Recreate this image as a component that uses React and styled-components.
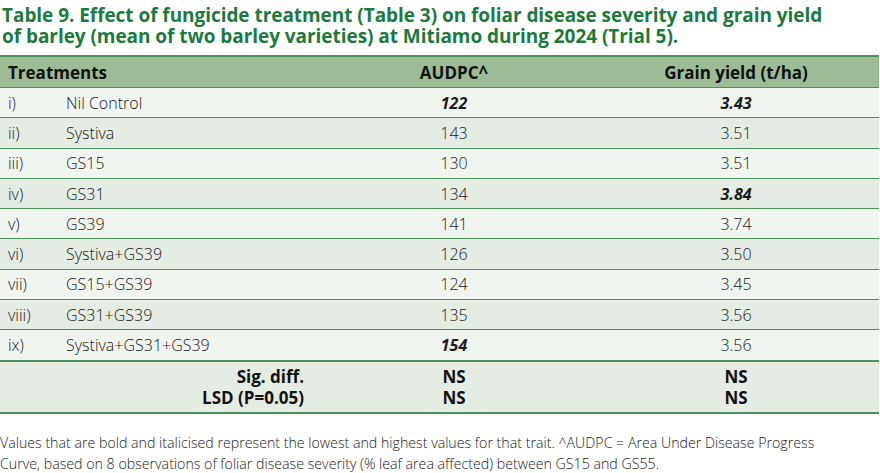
import React from "react";
import styled, { createGlobalStyle } from "styled-components";

const Global = createGlobalStyle`
  html, body { margin: 0; padding: 0; background: #ffffff; }
  body { font-family: "Open Sans", "Noto Sans", sans-serif; color: #1a1a1a; }
`;

const Page = styled.div`
  width: 880px;
  height: 473px;
  overflow: hidden;
  background: #fff;
`;

const Title = styled.h1`
  margin: 0;
  padding: 5px 0 0 2px;
  height: 55px;
  box-sizing: border-box;
  font-family: "Open Sans", sans-serif;
  font-weight: 700;
  font-size: 19px;
  line-height: 21px;
  color: #1c7a3d;
  letter-spacing: -0.05px;
`;

const Table = styled.div`
  width: 879px;
  display: grid;
  grid-template-columns: 315px 278px 1fr;
  border-top: 2px solid #4e8f5b;
  border-bottom: 2px solid #4e8f5b;
`;

const HeadCell = styled.div`
  background: #9dbb97;
  height: 30px;
  display: flex;
  align-items: center;
  justify-content: ${(p) => (p.$left ? "flex-start" : "center")};
  padding-left: ${(p) => (p.$left ? "8px" : "0")};
  font-weight: 700;
  font-size: 17px;
  color: #111;
  border-bottom: 1px solid #4e8f5b;
`;

const Cell = styled.div`
  background: ${(p) => (p.$alt ? "#e5ece3" : "#f0f5ef")};
  height: 29.3px;
  display: flex;
  align-items: center;
  justify-content: ${(p) => (p.$left ? "flex-start" : "center")};
  font-size: 16px;
  color: #1a1a1a;
  border-bottom: ${(p) => (p.$last ? "2px" : "1px")} solid #4e8f5b;
  font-weight: ${(p) => (p.$hi ? 700 : 300)};
  font-style: ${(p) => (p.$hi ? "italic" : "normal")};
`;

const Num = styled.span`
  width: 58px;
  padding-left: 8px;
`;

const Foot = styled.div`
  background: #e5ece3;
  height: 50px;
  display: flex;
  flex-direction: column;
  justify-content: center;
  align-items: ${(p) => (p.$right ? "flex-end" : "center")};
  padding-right: ${(p) => (p.$right ? "11px" : "0")};
  font-weight: 700;
  font-size: 17px;
  line-height: 21px;
  color: #111;
`;

const Note = styled.p`
  margin: 0;
  padding: 18px 0 0 0;
  font-size: 14.2px;
  font-weight: 300;
  line-height: 21px;
  color: #1a1a1a;
`;

const rows = [
  ["i)", "Nil Control", "122", "3.43", true, true],
  ["ii)", "Systiva", "143", "3.51"],
  ["iii)", "GS15", "130", "3.51"],
  ["iv)", "GS31", "134", "3.84", false, true],
  ["v)", "GS39", "141", "3.74"],
  ["vi)", "Systiva+GS39", "126", "3.50"],
  ["vii)", "GS15+GS39", "124", "3.45"],
  ["viii)", "GS31+GS39", "135", "3.56"],
  ["ix)", "Systiva+GS31+GS39", "154", "3.56", true, false],
];

export default function App() {
  return (
    <Page>
      <Global />
      <Title>
        Table 9. Effect of fungicide treatment (Table 3) on foliar disease severity and grain yield
        <br />
        of barley (mean of two barley varieties) at Mitiamo during 2024 (Trial 5).
      </Title>
      <Table>
        <HeadCell $left>Treatments</HeadCell>
        <HeadCell>AUDPC^</HeadCell>
        <HeadCell>Grain yield (t/ha)</HeadCell>
        {rows.map(([n, t, a, g, ha, hg], i) => {
          const alt = i % 2 === 1;
          const last = i === rows.length - 1;
          return (
            <React.Fragment key={n}>
              <Cell $left $alt={alt} $last={last}>
                <Num>{n}</Num>
                {t}
              </Cell>
              <Cell $alt={alt} $last={last} $hi={ha}>{a}</Cell>
              <Cell $alt={alt} $last={last} $hi={hg}>{g}</Cell>
            </React.Fragment>
          );
        })}
        <Foot $right>
          <span>Sig. diff.</span>
          <span>LSD (P=0.05)</span>
        </Foot>
        <Foot>
          <span>NS</span>
          <span>NS</span>
        </Foot>
        <Foot>
          <span>NS</span>
          <span>NS</span>
        </Foot>
      </Table>
      <Note>
        Values that are bold and italicised represent the lowest and highest values for that trait. ^AUDPC = Area Under Disease Progress
        <br />
        Curve, based on 8 observations of foliar disease severity (% leaf area affected) between GS15 and GS55.
      </Note>
    </Page>
  );
}
